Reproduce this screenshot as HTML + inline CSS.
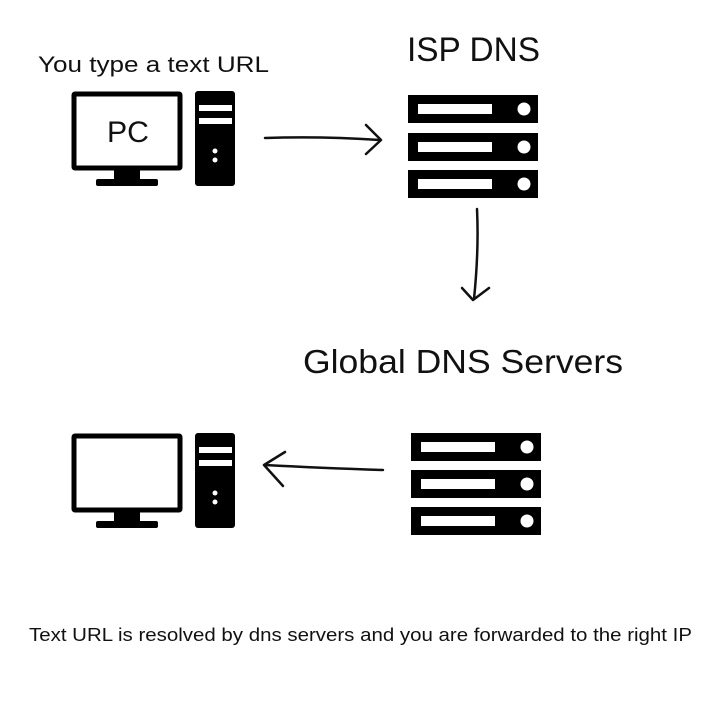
<!DOCTYPE html>
<html><head><meta charset="utf-8">
<style>
html,body{margin:0;padding:0;background:#fff;}
svg{display:block}
text{font-family:"Liberation Sans",sans-serif;fill:#111;}
</style></head>
<body>
<svg width="720" height="720" viewBox="0 0 720 720" xmlns="http://www.w3.org/2000/svg">
<defs>
<g id="pc">
  <rect x="74" y="94" width="106" height="74" fill="#fff" stroke="#000" stroke-width="5" rx="1"/>
  <rect x="114" y="168" width="26" height="12" fill="#000"/>
  <rect x="96" y="179" width="62" height="7" rx="2" fill="#000"/>
  <rect x="195" y="91" width="40" height="95" rx="3" fill="#000"/>
  <rect x="199" y="105" width="33" height="6" fill="#fff"/>
  <rect x="199" y="118" width="33" height="6" fill="#fff"/>
  <circle cx="215" cy="151" r="2.5" fill="#fff"/>
  <circle cx="215" cy="160" r="2.5" fill="#fff"/>
</g>
<g id="srv">
  <rect x="0" y="0" width="130" height="28" fill="#000"/>
  <rect x="10" y="9" width="74" height="10" fill="#fff"/>
  <circle cx="116" cy="14" r="6.5" fill="#fff"/>
</g>
</defs>

<text x="38" y="72" font-size="22" textLength="231" lengthAdjust="spacingAndGlyphs">You type a text URL</text>
<text x="407" y="61" font-size="34" textLength="133" lengthAdjust="spacingAndGlyphs">ISP DNS</text>
<text x="303" y="373" font-size="33" textLength="320" lengthAdjust="spacingAndGlyphs">Global DNS Servers</text>
<text x="29" y="641" font-size="18" textLength="663" lengthAdjust="spacingAndGlyphs">Text URL is resolved by dns servers and you are forwarded to the right IP</text>

<use href="#pc"/>
<text x="107" y="142" font-size="30" textLength="42" lengthAdjust="spacingAndGlyphs">PC</text>
<use href="#pc" transform="translate(0,342)"/>

<use href="#srv" transform="translate(408,95)"/>
<use href="#srv" transform="translate(408,133)"/>
<use href="#srv" transform="translate(408,170)"/>

<use href="#srv" transform="translate(411,433)"/>
<use href="#srv" transform="translate(411,470)"/>
<use href="#srv" transform="translate(411,507)"/>

<g fill="none" stroke="#111" stroke-width="2.5" stroke-linecap="round" stroke-linejoin="round">
  <path d="M265 138 Q320 136 380 140"/>
  <path d="M366 125 L381 140 L366 154"/>
  <path d="M477 209 Q479 250 474 299"/>
  <path d="M462 288 L473 300 L489 288"/>
  <path d="M383 470 Q320 468 265 465"/>
  <path d="M285 452 L264 465 L283 486"/>
</g>
</svg>
</body></html>
